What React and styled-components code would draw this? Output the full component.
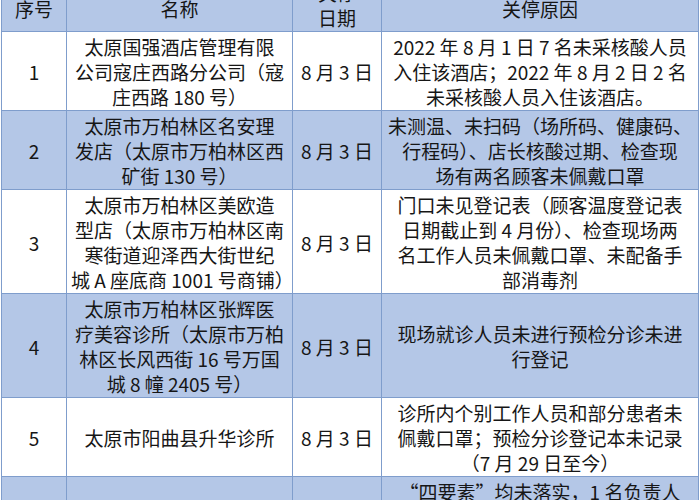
import React from 'react'
import styled, { createGlobalStyle } from 'styled-components'

const GlobalStyle = createGlobalStyle`
  html, body {
    margin: 0;
    padding: 0;
    background: #ffffff;
    overflow: hidden;
  }
  body {
    font-family: "Noto Sans CJK SC", "Noto Sans", sans-serif;
    color: #161616;
  }
`;

const Page = styled.div`
  width: 700px;
  height: 500px;
  overflow: hidden;
`;

const Table = styled.table`
  margin: -21px 0 0 1px;
  width: 697px;
  border-collapse: collapse;
  table-layout: fixed;
  font-size: 19px;
  line-height: 25px;
`;

const HeadCell = styled.th`
  background: #b4c7e7;
  border: 1px solid #7f9dcc;
  font-weight: 400;
  padding: ${({ $single }) => ($single ? '16px 4px 0' : '0 4px 1px')};
  text-align: center;
  vertical-align: ${({ $single }) => ($single ? 'top' : 'bottom')};
  white-space: nowrap;
`;

const Row = styled.tr`
  background: ${({ $shaded }) => ($shaded ? '#b4c7e7' : '#ffffff')};
`;

const Cell = styled.td`
  border: 1px solid #7f9dcc;
  padding: 2px 4px 1px;
  text-align: center;
  vertical-align: ${({ $top }) => ($top ? 'top' : 'middle')};
  white-space: nowrap;
  height: ${({ $h }) => ($h ? `${$h}px` : 'auto')};
`;

const Line = styled.div`
  white-space: nowrap;
`;

const rows = [
  {
    no: '1',
    name: ['太原国强酒店管理有限', '公司寇庄西路分公司（寇', '庄西路 180 号）'],
    reason: ['2022 年 8 月 1 日 7 名未采核酸人员', '入住该酒店；2022 年 8 月 2 日 2 名', '未采核酸人员入住该酒店。'],
  },
  {
    no: '2',
    name: ['太原市万柏林区名安理', '发店（太原市万柏林区西', '矿街 130 号）'],
    reason: ['未测温、未扫码（场所码、健康码、', '行程码）、店长核酸过期、检查现', '场有两名顾客未佩戴口罩'],
  },
  {
    no: '3',
    name: ['太原市万柏林区美欧造', '型店（太原市万柏林区南', '寒街道迎泽西大街世纪', '城 A 座底商 1001 号商铺）'],
    reason: ['门口未见登记表（顾客温度登记表', '日期截止到 4 月份）、检查现场两', '名工作人员未佩戴口罩、未配备手', '部消毒剂'],
  },
  {
    no: '4',
    name: ['太原市万柏林区张辉医', '疗美容诊所（太原市万柏', '林区长风西街 16 号万国', '城 8 幢 2405 号）'],
    reason: ['现场就诊人员未进行预检分诊未进', '行登记'],
  },
  {
    no: '5',
    name: ['太原市阳曲县升华诊所'],
    reason: ['诊所内个别工作人员和部分患者未', '佩戴口罩；预检分诊登记本未记录', '（7 月 29 日至今）'],
  },
  {
    no: '',
    name: [''],
    reason: ['“四要素”均未落实，1 名负责人', '未佩戴口罩'],
    date: '',
    h: 60,
    top: true,
  },
];

const Lines = ({ items }) => items.map((t, i) => <Line key={i}>{t || '\u00a0'}</Line>);

export default function App() {
  return (
    <Page>
      <GlobalStyle />
      <Table>
        <colgroup>
          <col style={{ width: 65 }} />
          <col style={{ width: 226 }} />
          <col style={{ width: 89 }} />
          <col style={{ width: 317 }} />
        </colgroup>
        <thead>
          <tr>
            <HeadCell $single>序号</HeadCell>
            <HeadCell $single>名称</HeadCell>
            <HeadCell>
              <Line>关停</Line>
              <Line>日期</Line>
            </HeadCell>
            <HeadCell $single>关停原因</HeadCell>
          </tr>
        </thead>
        <tbody>
          {rows.map((r, i) => (
            <Row key={i} $shaded={i % 2 === 1}>
              <Cell $h={r.h} $top={r.top}>{r.no}</Cell>
              <Cell $h={r.h} $top={r.top}><Lines items={r.name} /></Cell>
              <Cell $h={r.h} $top={r.top}>{r.date !== undefined ? r.date : '8 月 3 日'}</Cell>
              <Cell $h={r.h} $top={r.top}><Lines items={r.reason} /></Cell>
            </Row>
          ))}
        </tbody>
      </Table>
    </Page>
  );
}
